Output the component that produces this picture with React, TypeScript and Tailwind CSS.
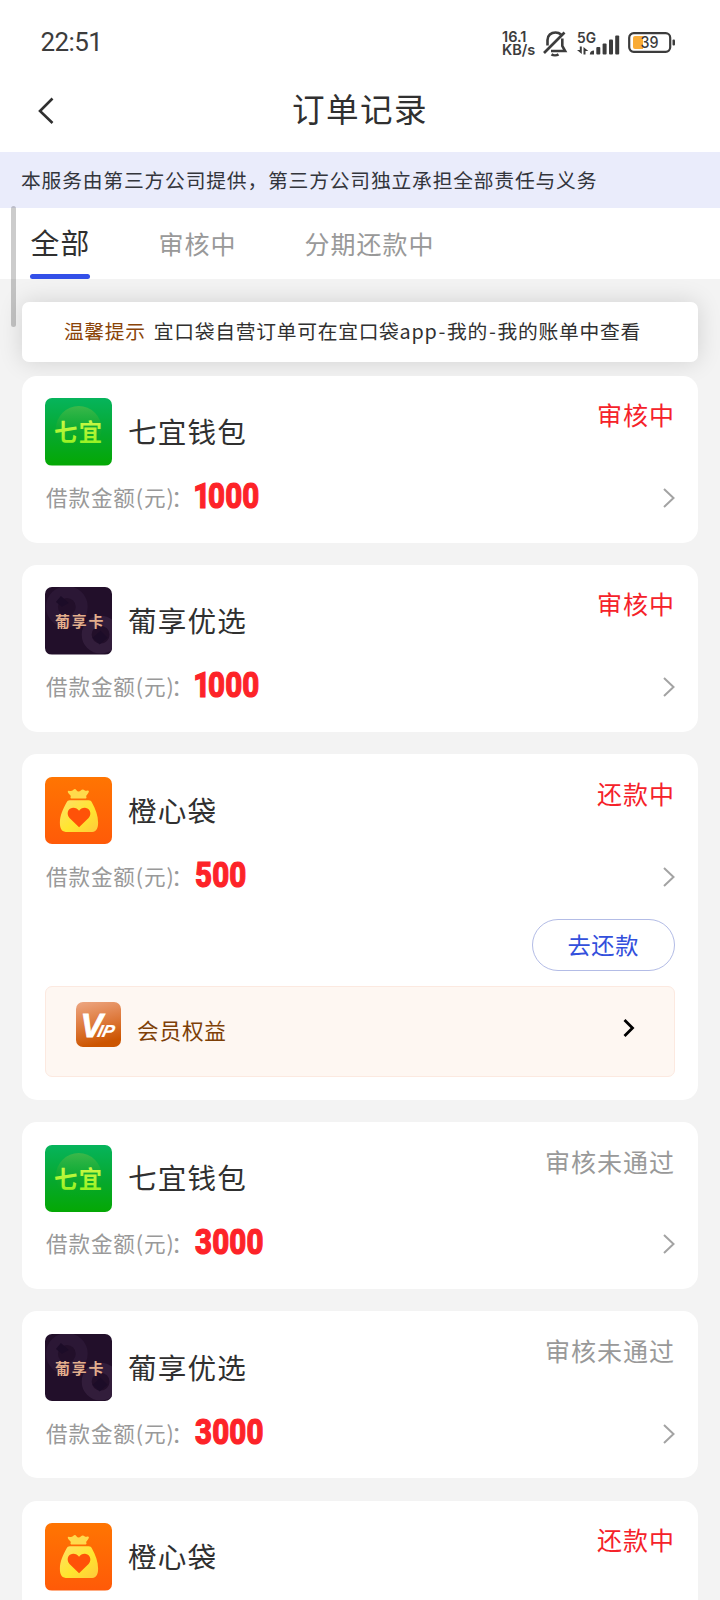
import React from "react";

type Brand = "qiyi" | "puxiang" | "chengxin";

interface Order {
  brand: Brand;
  name: string;
  amount: string;
  status: string;
  muted?: boolean;
  repay?: boolean;
}

const orders: Order[] = [
  { brand: "qiyi", name: "七宜钱包", amount: "1000", status: "审核中" },
  { brand: "puxiang", name: "葡享优选", amount: "1000", status: "审核中" },
  { brand: "chengxin", name: "橙心袋", amount: "500", status: "还款中", repay: true },
  { brand: "qiyi", name: "七宜钱包", amount: "3000", status: "审核未通过", muted: true },
  { brand: "puxiang", name: "葡享优选", amount: "3000", status: "审核未通过", muted: true },
  { brand: "chengxin", name: "橙心袋", amount: "500", status: "还款中" },
];

function QiyiLogo() {
  return (
    <svg viewBox="0 0 68 68" className="block size-full">
      <defs>
        <linearGradient id="qy-bg" x1="0" y1="0" x2="0" y2="1">
          <stop offset="0" stopColor="#06b45c" />
          <stop offset="0.55" stopColor="#06a82c" />
          <stop offset="1" stopColor="#04a803" />
        </linearGradient>
        <linearGradient id="qy-disc" x1="0" y1="0" x2="0" y2="1">
          <stop offset="0" stopColor="#3cb84a" />
          <stop offset="0.6" stopColor="#14a82c" stopOpacity="0.4" />
          <stop offset="1" stopColor="#06a81c" stopOpacity="0" />
        </linearGradient>
        <linearGradient id="qy-text" x1="0" y1="0" x2="0" y2="1">
          <stop offset="0" stopColor="#d8fa4e" />
          <stop offset="1" stopColor="#8cf01c" />
        </linearGradient>
      </defs>
      <rect width="68" height="68" fill="url(#qy-bg)" />
      <circle cx="34" cy="31" r="23" fill="url(#qy-disc)" />
      <text
        x="9"
        y="43.500"
        fontSize="23.5"
        fontWeight="700"
        letterSpacing="1.5"
        fill="url(#qy-text)"
        fontFamily="'Noto Sans CJK SC', sans-serif"
      >
        七宜
      </text>
    </svg>
  );
}

function PuxiangLogo() {
  return (
    <svg viewBox="0 0 68 68" className="block size-full">
      <rect width="68" height="68" fill="#220f2a" />
      <circle cx="22" cy="20" r="15" fill="none" stroke="#2b1735" strokeWidth="12" />
      <circle cx="56" cy="48" r="14" fill="none" stroke="#321d3b" strokeWidth="10" />
      <path d="M16 9l8 7-7 4-6-5zM56 44l7 7-8 7-7-7z" fill="#1c0c28" />
      <text
        x="10"
        y="40.500"
        fontSize="15"
        fontWeight="700"
        letterSpacing="1.9"
        fill="#e3ae8c"
        fontFamily="'Noto Sans CJK SC', sans-serif"
      >
        葡享卡
      </text>
    </svg>
  );
}

function ChengxinLogo() {
  return (
    <svg viewBox="0 0 68 68" className="block size-full">
      <defs>
        <linearGradient id="cx-bg" x1="0" y1="0" x2="0" y2="1">
          <stop offset="0" stopColor="#ff7502" />
          <stop offset="1" stopColor="#ff5a08" />
        </linearGradient>
        <linearGradient id="cx-bag" x1="0" y1="0" x2="1" y2="1">
          <stop offset="0" stopColor="#ffdf6a" />
          <stop offset="0.55" stopColor="#ffe62e" />
          <stop offset="1" stopColor="#ffc93c" />
        </linearGradient>
      </defs>
      <rect width="68" height="68" fill="url(#cx-bg)" />
      <path
        d="M24 13.800c2 .6 3.400 .2 4.600-1 1.200-1 2.300-.7 3.100 .5 1.200 1.600 2.800 1.700 4.300 .2 1.300-1.200 2.700-1.200 3.800-.2.800.700 1.800.700 3 .3 1.300-.3 1.700.5 1.200 1.700-.8 1.700-1.800 2.500-2.400 3.600-.3.600.2 1 .2 1.700 0 .7-.6 1-1.400 1H27c-.8 0-1.300-.3-1.300-1s.5-1.100.2-1.700c-.4-1-1.700-1.500-2.600-3.100-.6-1.200-.4-2.200.700-2z"
        fill="#ffda4c"
      />
      <path
        d="M25 23.500h19c1.600 0 2.600.8 3.300 2.100 3.700 6.400 6.200 13.500 6.200 20.400 0 6.600-2.300 9.500-8 9.500H23c-5.800 0-8-3-8-9.500 0-6.900 3-14 6.700-20.400.8-1.300 1.700-2.100 3.300-2.100z"
        fill="url(#cx-bag)"
      />
      <path
        d="M34.300 50.500L24.700 41.200c-3.200-3.200-2.300-9.900 3.500-10.200 2.700-.1 4.600 1.200 6.100 2.900 1.500-1.700 3.300-3 6-2.900 5.500.3 7 6.800 3.600 10.200z"
        fill="#ff5208"
      />
    </svg>
  );
}

function VipBadge() {
  return (
    <svg viewBox="0 0 45 45" className="block size-[45px] rounded-[7px]">
      <defs>
        <linearGradient id="vip-bg" x1="0" y1="0" x2="0.25" y2="1">
          <stop offset="0" stopColor="#eda783" />
          <stop offset="0.5" stopColor="#df7d42" />
          <stop offset="1" stopColor="#cc5500" />
        </linearGradient>
      </defs>
      <rect width="45" height="45" fill="url(#vip-bg)" />
      <g fill="#fff" stroke="#fff" fontFamily="'Liberation Sans', sans-serif" fontWeight="700" fontStyle="italic">
        <text x="4.500" y="34.500" fontSize="33.500" strokeWidth="0.8">
          V
        </text>
        <text x="0" y="0" fontSize="17.500" strokeWidth="0.2" transform="translate(20.500 34.500) skewX(-14)">
          IP
        </text>
      </g>
    </svg>
  );
}

function Logo({ brand }: { brand: Brand }) {
  return (
    <div className="size-[67.5px] shrink-0 overflow-hidden rounded-[7px]">
      {brand === "qiyi" && <QiyiLogo />}
      {brand === "puxiang" && <PuxiangLogo />}
      {brand === "chengxin" && <ChengxinLogo />}
    </div>
  );
}

function Amount({ value }: { value: string }) {
  return (
    <span className="-mt-[3px] -ml-px inline-block origin-left scale-x-[0.83] font-[Roboto,sans-serif] text-[35.5px] leading-[40px] font-extrabold tracking-[0.2px] text-[#fd2328] [-webkit-text-stroke:1.2px_#fd2328]">
      {value.split("").map((digit, i) => (
        <span key={i} className={digit === "1" ? "-ml-[2px] -mr-[3px]" : ""}>
          {digit}
        </span>
      ))}
    </span>
  );
}

function OrderCard({ order }: { order: Order }) {
  return (
    <article className="rounded-[15px] bg-white px-[22.5px] pt-[22.5px] pb-[22.5px]">
      <div className="flex h-[67.5px]">
        <Logo brand={order.brand} />
        <h2 className="-mt-[2px] ml-[15.500px] self-center text-[28.6px] leading-[40px] tracking-[1.2px] text-[#303030]">
          {order.name}
        </h2>
        <span
          className={
            "ml-auto text-[25px] leading-[32px] tracking-[1px] " +
            (order.muted ? "text-[#999999]" : "text-[#f5222a]")
          }
        >
          {order.status}
        </span>
      </div>
      <div className="mt-[9px] flex h-[45.500px] items-center">
        <span className="-mt-[1px] mr-[2px] ml-px flex text-[21.6px] leading-[32px] tracking-[0.9px] text-[#999999]">
          借款金额(元)<span className="-ml-[3.500px]">：</span>
        </span>
        <Amount value={order.amount} />
        <svg viewBox="0 0 12 20" className="mt-px ml-auto h-5 w-3 fill-none stroke-[#a3a3a3] stroke-2">
          <path d="M1 1l9.500 9L1 19" />
        </svg>
      </div>
      {order.repay && (
        <div className="pt-[20.500px]">
          <div className="flex justify-end">
            <button className="h-[51.500px] w-[143.500px] rounded-full border-[1.5px] border-[#b3bce6] text-[23.2px] leading-[40px] tracking-[0.8px] text-[#3350dc]">
              <span className="relative -top-px">去还款</span>
            </button>
          </div>
          <div className="mt-[15.500px] flex h-[91px] items-start rounded-[7px] border-[1.5px] border-[#fce9e0] bg-[#fef7f2] pt-[15px] pr-[39px] pl-[30px]">
            <VipBadge />
            <span className="mt-[11.500px] ml-4 text-[21.6px] leading-[32px] tracking-[0.9px] text-[#7d3f07]">会员权益</span>
            <svg viewBox="0 0 12 20" className="mt-[16px] ml-auto h-5 w-3 fill-none stroke-black stroke-[2.8]">
              <path d="M1.500 2l8 8-8 8" />
            </svg>
          </div>
        </div>
      )}
    </article>
  );
}

function StatusBar() {
  return (
    <div className="flex h-[68px] items-center pt-[17px] pr-[44px] pl-[40.500px] text-[#3c3c3c]">
      <span className="-mt-px font-[Roboto,sans-serif] text-[26px] leading-none tracking-[-0.6px]">22:51</span>
      <div className="ml-auto flex items-center">
        <div className="w-[36px] font-[Inter,sans-serif] text-[14.5px] leading-[13px] font-semibold">
          <div>16.1</div>
          <div>KB/s</div>
        </div>
        <svg viewBox="0 0 26 28" className="ml-[4px] h-7 w-[26px] fill-none stroke-[#3c3c3c] stroke-[2.6]">
          <path d="M5.500 16.500V11c0-4.500 3.500-7.500 8-7.500 2.200 0 4 .6 5.500 2M20.300 9.500V17l2.800 5H9" />
          <path d="M2 24L22.500 3.500" />
          <path d="M9.500 25.300c1.800 1.200 5.200 1.200 7 0" />
        </svg>
        <svg viewBox="0 0 44 26" className="ml-[9px] h-[26px] w-11 fill-[#3c3c3c]">
          <text x="0" y="13" fontSize="14.500" fontWeight="600" fontFamily="Inter, sans-serif" textLength="19" lengthAdjust="spacingAndGlyphs">
            5G
          </text>
          <path d="M2.800 16.500h2V24l-4.800-4h2.800zM6.500 24.500v-7.500l4.800 4H8.500v3.500z" />
          <path d="M12.800 24.500c0-2.500 1.700-4 4.200-4v4z" />
          <rect x="19.300" y="17" width="4" height="7.500" rx="1" />
          <rect x="25.600" y="13.500" width="4" height="11" rx="1" />
          <rect x="32" y="9.500" width="4" height="15" rx="1" />
          <rect x="38.200" y="5.500" width="4" height="19" rx="1" />
        </svg>
        <svg viewBox="0 0 48 22" className="ml-[7px] h-[22px] w-12">
          <rect x="1.200" y="1.200" width="41" height="18.600" rx="4.500" fill="none" stroke="#3c3c3c" strokeWidth="2.2" />
          <path d="M7 4h8v13H7a2 2 0 0 1-2-2V6a2 2 0 0 1 2-2z" fill="#f9ac37" />
          <rect x="44.500" y="7.500" width="2.500" height="6" rx="1" fill="#3c3c3c" />
          <text x="12.500" y="16" fontSize="15.500" fontWeight="500" fontFamily="Inter, sans-serif" fill="#3c3c3c" textLength="18" lengthAdjust="spacingAndGlyphs">
            39
          </text>
        </svg>
      </div>
    </div>
  );
}

export default function App() {
  return (
    <div className="relative flex h-[1600px] w-[720px] flex-col overflow-hidden bg-[#f3f3f3] font-['Noto_Sans_CJK_SC',sans-serif] whitespace-nowrap">
      <header className="h-[152px] shrink-0 bg-white">
        <StatusBar />
        <div className="grid h-[84px] grid-cols-[1fr_auto_1fr] items-center px-[38px]">
          <svg viewBox="0 0 16 28" className="h-7 w-4 fill-none stroke-[#303030] stroke-[2.6]">
            <path d="M14.500 2.500L2 15l12.500 12" />
          </svg>
          <h1 className="-mt-[5px] text-[32.6px] leading-[44px] tracking-[1.400px] text-[#303030]">订单记录</h1>
        </div>
      </header>

      <p className="h-14 shrink-0 bg-[#eaecfb] pl-[21px] text-[19.8px] leading-[55px] tracking-[0.8px] text-[#33353c]">
        本服务由第三方公司提供，第三方公司独立承担全部责任与义务
      </p>

      <nav className="flex h-[71px] shrink-0 bg-white pl-[30px] text-[25px] tracking-[1px] text-[#999999]">
        <div className="flex w-[60px] flex-col justify-between">
          <span className="pl-[0.500px] text-[28.8px] leading-[68px] tracking-[1.200px] text-[#303030]">全部</span>
          <span className="-mt-[3px] h-[5.500px] w-[60px] shrink-0 rounded-full bg-[#3350e8]" />
        </div>
        <span className="ml-[68.500px] leading-[71px]">审核中</span>
        <span className="ml-[68px] leading-[71px]">分期还款中</span>
      </nav>

      <main className="flex flex-col px-[22.400px] pt-[22.500px]">
        <div className="h-[60px] shrink-0 rounded-[7px] bg-white pl-[41.500px] text-[19.8px] leading-[58px] tracking-[0.700px] text-[#303030] shadow-[0_0_24px_rgba(0,0,0,0.14)]">
          <span className="mr-2 text-[#8a4408]">温馨提示</span>
          宜口袋自营订单可在宜口袋app<span className="mx-[1px]">-</span>我的<span className="mx-[1px]">-</span>我的账单中查看
        </div>
        <div className="relative mt-[14.200px] flex flex-col gap-[22.300px]">
          {orders.map((order, i) => (
            <OrderCard key={i} order={order} />
          ))}
        </div>
      </main>

      <div className="absolute top-[206px] left-[11px] h-[121px] w-[5px] rounded-full bg-black/20" />
    </div>
  );
}
